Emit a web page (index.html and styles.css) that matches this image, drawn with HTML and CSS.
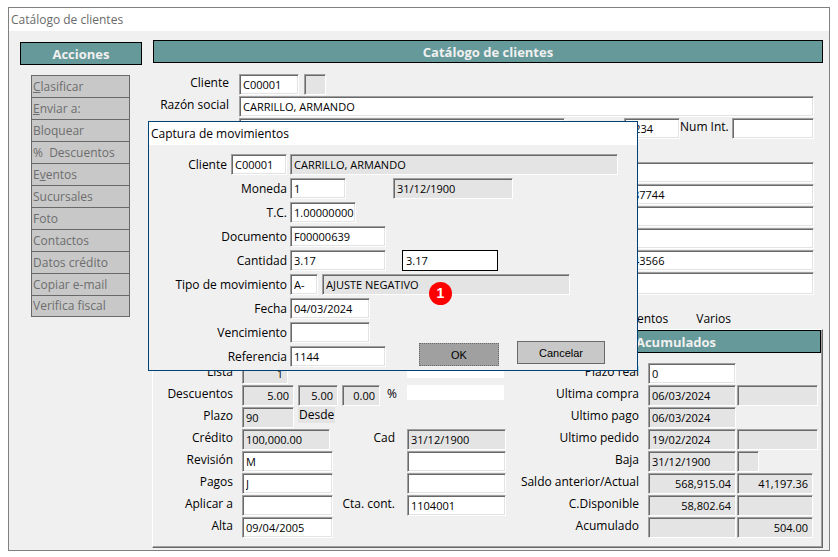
FILE: index.html
```html
<!DOCTYPE html>
<html lang="es">
<head>
<meta charset="utf-8">
<title>Catálogo de clientes</title>
<link rel="stylesheet" href="styles.css">
</head>
<body>
<main class="window">
  <div class="titlebar">Catálogo de clientes</div>
  <div class="content">
    <aside class="side">
      <h2 class="banner">Acciones</h2>
      <nav class="actions">
        <button type="button"><u>C</u>lasificar</button>
        <button type="button"><u>E</u>nviar a:</button>
        <button type="button">Bloquear</button>
        <button type="button">%&nbsp; Descuentos</button>
        <button type="button">E<u>v</u>entos</button>
        <button type="button">Sucursales</button>
        <button type="button">Foto</button>
        <button type="button">Contactos</button>
        <button type="button">Datos crédito</button>
        <button type="button">Copiar e-mail</button>
        <button type="button">Verifica fiscal</button>
      </nav>
    </aside>
    <section class="main">
      <h1 class="banner">Catálogo de clientes</h1>
      <div class="form">
        <div class="row"><label for="cli">Cliente</label><input class="w60" id="cli" value="C00001"><input class="w24" aria-label="Estado" readonly></div>
        <div class="row"><label for="raz">Razón social</label><input class="grow" id="raz" value="CARRILLO, ARMANDO"></div>
        <div class="row"><span class="lead"></span><input class="grow" aria-label="Calle"><input class="w56 number" aria-label="Número" value="1234"><label class="after" for="int">Num Int.</label><input class="w82" id="int"></div>
        <div class="row"></div>
        <div class="row"><span class="lead"></span><input class="tail" aria-label="Colonia"></div>
        <div class="row"><span class="lead"></span><input class="tail" aria-label="Teléfono" value="87744"></div>
        <div class="row"><span class="lead"></span><input class="tail" aria-label="Ciudad"></div>
        <div class="row"><span class="lead"></span><input class="tail" aria-label="Estado"></div>
        <div class="row"><span class="lead"></span><input class="tail" aria-label="Fax" value="43566"></div>
        <div class="row last"><span class="lead"></span><input class="tail" aria-label="Correo"></div>
      </div>
      <div class="tabs"><a href="#documentos">Documentos</a><a href="#varios">Varios</a></div>
      <div class="panel">
        <h2 class="banner totals">Acumulados</h2>
        <div class="grid">
          <label for="lista">Lista</label><div class="cell"><input class="w46 num" id="lista" value="1" readonly></div><span></span><div class="cell"><span class="blank"></span></div>
          <label for="preal">Plazo real</label><div class="cell"><input class="w88" id="preal" value="0"></div>

          <label for="desc">Descuentos</label><div class="cell wide"><input class="w52 num" id="desc" value="5.00" readonly><input class="w40 num" aria-label="Descuento 2" value="5.00" readonly><input class="w38 num" aria-label="Descuento 3" value="0.00" readonly><span class="pct">%</span></div><div class="cell"><span class="blank"></span></div>
          <label for="ucom">Ultima compra</label><div class="cell"><input class="w88" id="ucom" value="06/03/2024" readonly><input class="grow" aria-label="Compra" readonly></div>

          <label for="plazo">Plazo</label><div class="cell wide"><input class="w52" id="plazo" value="90" readonly><span class="since">Desde</span></div><span></span>
          <label for="upag">Ultimo pago</label><div class="cell"><input class="w88" id="upag" value="06/03/2024" readonly></div>

          <label for="cred">Crédito</label><div class="cell"><input class="w88" id="cred" value="100,000.00" readonly></div>
          <label class="mid" for="cad">Cad</label><div class="cell"><input class="grow" id="cad" value="31/12/1900" readonly></div>
          <label for="uped">Ultimo pedido</label><div class="cell"><input class="w88" id="uped" value="19/02/2024" readonly><input class="grow" aria-label="Pedido" readonly></div>

          <label for="rev">Revisión</label><div class="cell"><input class="grow" id="rev" value="M"></div><span></span><div class="cell"><input class="grow" aria-label="Revisión 2"></div>
          <label for="baja">Baja</label><div class="cell"><input class="w88" id="baja" value="31/12/1900" readonly><input class="w24" aria-label="Motivo" readonly></div>

          <label for="pag">Pagos</label><div class="cell"><input class="grow" id="pag" value="J"></div><span></span><div class="cell"><input class="grow" aria-label="Pagos 2"></div>
          <label for="sal">Saldo anterior/Actual</label><div class="cell short"><input class="w88 num" id="sal" value="568,915.04" readonly><input class="grow num" aria-label="Saldo actual" value="41,197.36" readonly></div>

          <label for="apl">Aplicar a</label><div class="cell"><input class="grow" id="apl"></div>
          <label class="mid" for="cta">Cta. cont.</label><div class="cell"><input class="grow" id="cta" value="1104001"></div>
          <label for="disp">C.Disponible</label><div class="cell short"><input class="w88 num" id="disp" value="58,802.64" readonly><input class="grow" aria-label="Disponible actual" readonly></div>

          <label for="alta">Alta</label><div class="cell"><input class="grow" id="alta" value="09/04/2005"></div><span></span><span></span>
          <label for="acu">Acumulado</label><div class="cell short"><input class="w88" id="acu" readonly><input class="grow num" aria-label="Acumulado actual" value="504.00" readonly></div>
        </div>
      </div>
    </section>
  </div>

  <section class="dialog" role="dialog" aria-label="Captura de movimientos">
    <div class="dialog-title">Captura de movimientos</div>
    <div class="dialog-body">
      <div class="line"><label class="client" for="dcli">Cliente</label><input class="w56 code" id="dcli" value="C00001"><input class="name" aria-label="Nombre" value="CARRILLO, ARMANDO" readonly></div>
      <div class="line"><label for="mon">Moneda</label><input class="w56" id="mon" value="1"><input class="date" aria-label="Fecha de cambio" value="31/12/1900" readonly></div>
      <div class="line"><label for="tc">T.C.</label><input class="w66" id="tc" value="1.00000000"></div>
      <div class="line"><label for="doc">Documento</label><input class="w96" id="doc" value="F00000639"></div>
      <div class="line"><label for="cant">Cantidad</label><input class="w96" id="cant" value="3.17"><input class="w96 plain" aria-label="Importe" value="3.17"></div>
      <div class="line"><label for="tipo">Tipo de movimiento</label><input class="w28" id="tipo" value="A-"><input class="kind" aria-label="Descripción" value="AJUSTE NEGATIVO" readonly></div>
      <div class="line"><label for="fec">Fecha</label><input class="w80" id="fec" value="04/03/2024"></div>
      <div class="line"><label for="ven">Vencimiento</label><input class="w80" id="ven"></div>
      <div class="line"><label for="ref">Referencia</label><input class="w96" id="ref" value="1144"><button class="ok" type="button">OK</button><button class="cancel" type="button">Cancelar</button></div>
    </div>
    <span class="marker">1</span>
  </section>
</main>
</body>
</html>
```
FILE: styles.css
```css
* { box-sizing: border-box; }

body {
  margin: 0;
  padding: 7px 8px 6px;
  background: #fff;
  color: #000;
  font: 12px/16px "Open Sans", "Noto Sans", sans-serif;
}

.window {
  position: relative;
  border: 1px solid #808080;
  background: #f0f0f0;
}

.titlebar {
  height: 23px;
  padding: 4px 2px;
  background: #fff;
  color: #6a6a6a;
}

.content {
  display: flex;
  gap: 10px;
  padding: 9px 6px 2px 11px;
}

.side { flex: 0 0 122px; padding-top: 2px; }

.banner {
  margin: 0;
  height: 23px;
  border: 1px solid #000;
  background: #669999;
  color: #f0f0f0;
  font-size: 13px;
  font-weight: 700;
  line-height: 22px;
  text-align: center;
}

.main h1 { margin-left: 1px; }

.actions {
  display: flex;
  flex-direction: column;
  margin: 10px 12px 0 11px;
  border: 1px solid #696969;
  border-top: 0;
}

.actions button {
  height: 22px;
  padding: 0 1px;
  border: 0;
  border-top: 1px solid #696969;
  background: #c8c8c8;
  color: #6d6d6d;
  font: inherit;
  line-height: 20px;
  text-align: left;
}

.actions button:last-child { height: 21px; }

.main { flex: 1; min-width: 0; }

.form { padding: 11px 9px 0 1px; }

.row { display: flex; height: 22px; }
.row label, .row .lead { width: 76px; margin-right: 10px; padding-top: 1px; text-align: right; }
.row.last { height: 24px; }
.row.last input { height: 23px; }

input {
  min-width: 0;
  height: 21px;
  padding: 0 4px 0 3px;
  border: 1px solid;
  border-color: #a0a0a0 #fff #fff #a0a0a0;
  border-radius: 0;
  outline: 0;
  background: #fff;
  box-shadow: inset 1px 1px #696969, inset -1px -1px #e3e3e3;
  color: #000;
  font: 11px/16px "Open Sans", "Noto Sans", sans-serif;
}

input:read-only { background: #e4e4e4; }

.num { text-align: right; }
.grow { flex: 1; }
.w24 { width: 22px; }
.w28 { width: 28px; }
.w38 { width: 38px; }
.w40 { width: 40px; }
.w46 { width: 46px; }
.w52 { width: 52px; }
.w56 { width: 56px; }
.w60 { width: 60px; }
.w66 { width: 66px; padding-right: 0; }
.w80 { width: 80px; }
.w82 { width: 82px; }
.w88 { width: 88px; }
.w96 { width: 96px; }

.row .w24 { margin-left: 5px; }
.row .number { margin-left: 59px; }
.row .after { width: 52px; margin: 0; white-space: nowrap; text-align: left; }
.row .tail { flex: 1; padding-left: 393px; }

.tabs {
  display: flex;
  justify-content: flex-end;
  gap: 28px;
  padding: 15px 92px 2px 0;
}

.tabs a { color: #000; text-decoration: none; }

.panel {
  border: 1px solid;
  border-color: #fff #696969 #696969 #fff;
  padding-bottom: 8px;
  box-shadow: inset -1px -1px #a0a0a0;
}

.totals { width: 290px; margin: 0 1px 0 auto; }

.grid {
  display: grid;
  grid-template-columns: 80px 91px 56px 99px 1fr 170px;
  grid-auto-rows: 22px;
  column-gap: 9px;
  padding: 10px 4px 0 0;
}

.grid label { padding-top: 1px; text-align: right; white-space: nowrap; }
.grid .mid { padding-right: 3px; }
.cell { display: flex; gap: 1px; }
.wide { grid-column: span 2; gap: 4px; }
.short { padding-right: 5px; }
.pct { margin-left: 3px; padding-top: 1px; }
.since { align-self: flex-start; padding: 0 1px; background: #e4e4e4; }
.blank { width: 97px; height: 15px; background: #fff; }

.dialog {
  position: absolute;
  top: 113px;
  left: 139px;
  width: 490px;
  border: 1px solid #004275;
  background: #f0f0f0;
}

.dialog-title {
  height: 23px;
  padding: 4px 2px;
  background: #fff;
}

.dialog-body { padding: 9px 19px 0 0; }

.line { display: flex; height: 24px; }
.line label { width: 138px; margin-right: 3px; padding-top: 3px; text-align: right; }
.line .client { width: 78px; margin-right: 4px; }
.line .code { margin-right: 3px; }
.line .name { flex: 1; }
.line .date { width: 120px; margin-left: 47px; }
.line .plain { margin-left: 16px; border-color: #000; box-shadow: none; }
.line .kind { width: 248px; margin-left: 4px; }

.ok, .cancel {
  height: 23px;
  padding: 0;
  border: 1px solid #696969;
  border-radius: 0;
  background: #c8c8c8;
  color: #000;
  font: 11px/16px "Liberation Sans", sans-serif;
}

.ok {
  width: 80px;
  margin: -3px 0 0 33px;
  border-style: dotted;
  background: #a0a0a0;
}

.cancel { width: 88px; margin: -5px 0 0 18px; }

.marker {
  position: absolute;
  top: 160px;
  left: 280px;
  width: 23px;
  height: 23px;
  border-radius: 50%;
  background: #f00;
  color: #fff;
  font: 700 14px/22px "Liberation Sans", sans-serif;
  text-align: center;
}
```
